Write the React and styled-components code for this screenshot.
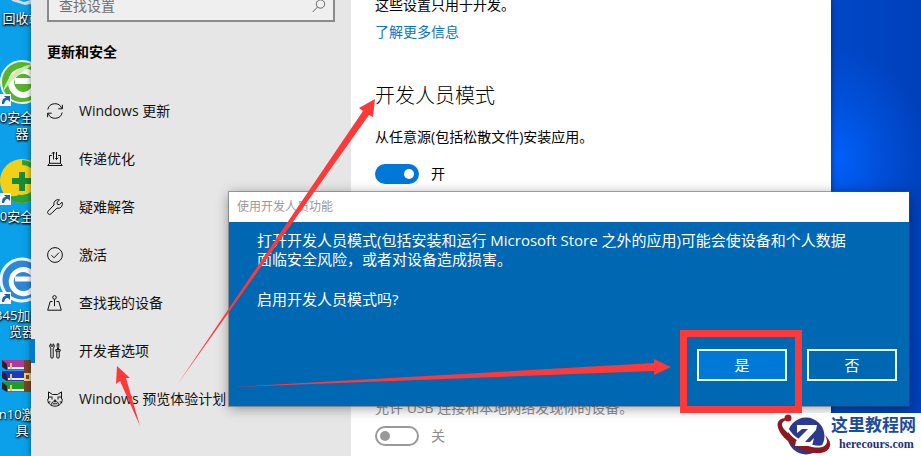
import React from 'react';
import styled, { createGlobalStyle } from 'styled-components';

const GlobalStyle = createGlobalStyle`
  * {
    box-sizing: border-box;
  }

  body {
    margin: 0;
    font-family: "Open Sans", "Noto Sans CJK SC", sans-serif;
    font-size: 14px;
    line-height: 20px;
    color: #000;
  }
`;

const Desktop = styled.div`
  position: relative;
  display: grid;
  grid-template-columns: 31px 1fr 90px;
  height: 100vh;
  overflow: hidden;
  background:
    radial-gradient(ellipse 90px 110px at calc(100% - 84px) 158px, #0060fa, rgba(0, 96, 250, 0.4) 50%, rgba(0, 96, 250, 0)),
    linear-gradient(90deg, #0aa0ea 0, #0aa0ea 40px, #0048c8 90%, #0040ba 100%);
`;

const Shortcuts = styled.div`
  overflow: hidden;
`;

const ShortcutList = styled.div`
  width: 80px;
  margin: -41px 0 0 -18px;
`;

const Shortcut = styled.div`
  height: 99px;
  text-align: center;
  font-size: 13px;
  line-height: 16px;
  color: #fff;
  text-shadow: 0 1px 2px #000, 1px 1px 2px #000;

  svg {
    display: block;
    margin: 0 auto 3px;
  }
`;

const Line = styled.div`
  display: flex;
  justify-content: center;
  white-space: nowrap;
`;

const SettingsWindow = styled.div`
  display: grid;
  grid-template-columns: 320px 1fr;
  background: #fff;
  box-shadow: 0 0 6px rgba(0, 0, 0, 0.5);
  overflow: hidden;
`;

const Sidebar = styled.aside`
  background: #e6e6e6;
`;

const SearchBox = styled.label`
  display: flex;
  align-items: center;
  height: 33px;
  margin: -11px 16px 0;
  padding: 0 7px 0 10px;
  border: 2px solid #8a8a8a;
  background: #efefef;
`;

const SearchInput = styled.input`
  flex: 1;
  min-width: 0;
  padding: 0;
  border: 0;
  outline: 0;
  background: none;
  font: inherit;

  &::placeholder {
    color: #707070;
  }
`;

const Category = styled.h2`
  margin: 20px 16px 25px;
  font-size: 14px;
  line-height: 20px;
  font-weight: 700;
`;

const NavItem = styled.a`
  display: flex;
  align-items: center;
  gap: 12px;
  height: 48px;
  color: #111;
  text-decoration: none;

  &::before {
    content: "";
    width: 4px;
    height: 24px;
    background: ${(props) => (props.$active ? '#0078d7' : 'transparent')};
  }

  svg {
    margin-right: 4px;
  }
`;

const Content = styled.main`
  padding: 0 24px;
  white-space: nowrap;
`;

const Intro = styled.p`
  margin: -5px 0 7px;
`;

const MoreLink = styled.a`
  display: block;
  color: #0a74cc;
  text-decoration: none;
`;

const SectionTitle = styled.h1`
  margin: 39px 0 16px;
  font-size: 20px;
  line-height: 30px;
  font-weight: 300;
`;

const Setting = styled.section`
  display: flex;
  flex-direction: column;
  gap: ${(props) => (props.$disabled ? '8px' : '17px')};
  margin-bottom: 214px;
  color: ${(props) => (props.$disabled ? '#8c8c8c' : '#000')};
`;

const Text = styled.p`
  margin: 0;
`;

const ToggleRow = styled.label`
  display: flex;
  align-items: center;
  gap: 12px;
`;

const Toggle = styled.input`
  appearance: none;
  display: flex;
  align-items: center;
  width: 44px;
  height: 20px;
  margin: 0;
  padding: 0 3px;
  border: 2px solid #999;
  border-radius: 10px;

  &::before {
    content: "";
    width: 10px;
    height: 10px;
    border-radius: 50%;
    background: #999;
  }

  &:checked {
    justify-content: flex-end;
    border-color: #0078d7;
    background: #0078d7;
  }

  &:checked::before {
    background: #fff;
  }
`;

const Dialog = styled.div`
  position: absolute;
  top: 192px;
  left: 229px;
  right: 12px;
  background: #0067b3;
  color: #fff;
  font-size: 15px;
  line-height: 19px;
  box-shadow: 0 0 0 1px rgba(70, 80, 90, 0.45), 0 2px 12px rgba(0, 0, 0, 0.4);
`;

const DialogTitle = styled.div`
  height: 30px;
  padding: 0 8px;
  background: #fff;
  color: #999;
  font-size: 12px;
  line-height: 30px;
`;

const DialogBody = styled.div`
  padding: 9px 28px 0;

  p {
    margin: 0 0 21px;
  }
`;

const DialogButtons = styled.div`
  display: flex;
  justify-content: flex-end;
  gap: 20px;
  padding: 19px 12px 25px;
`;

const DialogButton = styled.button`
  width: 90px;
  height: 32px;
  padding: 0;
  border: 2px solid #e4fbff;
  background: ${(props) => (props.$primary ? '#0078d7' : 'transparent')};
  color: #fff;
  font: inherit;
`;

const Annotations = styled.svg`
  position: absolute;
  top: 0;
  left: 0;
  pointer-events: none;
`;

const Watermark = styled.div`
  position: absolute;
  right: 0;
  bottom: 0;
  display: flex;
  width: 147px;
  height: 43px;
  background: #fff;
  white-space: nowrap;
`;

const WatermarkText = styled.div`
  color: #1b4c9c;
  font-size: 17px;
  line-height: 24px;
  font-weight: 700;

  small {
    display: block;
    padding-left: 8px;
    font-family: "Liberation Serif", serif;
    font-size: 12px;
    line-height: 14px;
    color: #1d2f80;
  }
`;

const icons = {
  update: (
    <>
      <path d="M.8 6.5A7.3 7.3 0 0 1 14.8 5.5M15.2 9.5A7.3 7.3 0 0 1 1.2 10.5" />
      <path d="M15.4 1.8v4H11.3M.6 14.2v-4h4.1" />
    </>
  ),
  delivery: (
    <>
      <path d="M4.8 4.5H2.5v7.8M11.2 4.5h2.3v7.8M2.5 12.3L.7 14.5h14.6l-1.8-2.2zM6.5 8.5V1" />
      <path d="M9.5 1v7.5M4.8 2.8L6.5 1l1.3 1.4M8.2 7.1l1.3 1.4 1.7-1.8" />
    </>
  ),
  wrench: (
    <path d="M15 3.2l-2.6 2.5-2-.4-.4-2L12.5.9A4.2 4.2 0 0 0 7 6L1.2 12a2 2 0 0 0 2.9 2.8L10 9.1a4.2 4.2 0 0 0 5-5.9z" />
  ),
  activate: (
    <>
      <circle cx="8" cy="8" r="7.4" />
      <path d="M4.4 8.2L7 10.8l5-5.2" />
    </>
  ),
  find: (
    <>
      <circle cx="7.5" cy="2.4" r="1.8" />
      <path d="M7.5 4.2v7M5.5 6.5H3.2L.7 15.2h13.6L11.8 6.5H9.5" />
    </>
  ),
  developer: (
    <>
      <path d="M4 .8a2.4 2.4 0 0 0-.2 4.2V14a1.2 1.2 0 0 0 2.4 0V5A2.4 2.4 0 0 0 6 .8v2.4H4z" />
      <path d="M10.2.8h1.6v3l-.3.8v2h-1v-2l-.3-.8zM8.8 6.6h4.4v1.6H8.8zM9.8 8.2V14a1.2 1.2 0 0 0 2.4 0V8.2" />
    </>
  ),
  insider: (
    <>
      <path d="M1.5 8V.9l4 2.6h5l4-2.6V8M.7 8.2C.7 12 3.5 15.2 8 15.2S15.3 12 15.3 8.2M1.5 6h4M10.5 6h4M.7 8.2l.8-.4M15.3 8.2l-.8-.4M.8 11.4l2.6-.6M15.2 11.4l-2.6-.6" />
      <path d="M5 6.5v2M11 6.5v2M7 9.2h2L8 10.4zM4.2 13.8c0-2.2 1.6-3.3 3.8-3.2 2.2-.1 3.8 1 3.8 3.2M5.5 12.8h5" />
    </>
  ),
};

function Icon({ name }) {
  return (
    <svg width="16" height="16" viewBox="0 0 16 16" fill="none" stroke="#111" strokeWidth="1">
      {icons[name]}
    </svg>
  );
}

const navItems = [
  { icon: 'update', label: 'Windows 更新' },
  { icon: 'delivery', label: '传递优化' },
  { icon: 'wrench', label: '疑难解答' },
  { icon: 'activate', label: '激活' },
  { icon: 'find', label: '查找我的设备' },
  { icon: 'developer', label: '开发者选项', active: true },
  { icon: 'insider', label: 'Windows 预览体验计划' },
];

// Small "linked file" arrow in the corner of a desktop icon
const LinkArrow = () => (
  <>
    <path d="M2 36h11v12H2z" fill="#f4f7fa" />
    <path d="M4 46c0-4 1-6 4-6l-2-2h6v6l-2-2c-3 0-3 2-4 4z" fill="#245fa8" />
  </>
);

const shortcuts = [
  {
    lines: ['回收站'],
    art: <path d="M12 38l14 5 16-5-2 6-13 2-13-4z" fill="#d8dde1" />,
  },
  {
    lines: ['360安全浏览', '器'],
    art: (
      <>
        <circle cx="24" cy="24" r="21" fill="#55b52b" stroke="#eef8ea" strokeWidth="2" />
        <path d="M36 30a12 12 0 1 1 1-7H17" fill="none" stroke="#fff" strokeWidth="6" />
        <path d="M5 34C8 19 21 7 39 5 23 13 13 22 5 34z" fill="#c9eeaa" />
        <LinkArrow />
      </>
    ),
  },
  {
    lines: ['360安全卫士'],
    art: (
      <>
        <circle cx="24" cy="24" r="22" fill="#f3d018" />
        <path d="M24 3a21 21 0 0 1 0 43c-9 0-13-4-15-8 8 3 15 0 16-6z" fill="#29a336" />
        <circle cx="24" cy="23" r="15" fill="#f3d018" />
        <path d="M21 15h6v6h7v6h-7v7h-6v-7h-7v-6h7z" fill="#188b36" />
        <LinkArrow />
      </>
    ),
  },
  {
    lines: ['2345加速浏', '览器'],
    art: (
      <>
        <circle cx="24" cy="24" r="21" fill="#2d87d8" stroke="#edf7ff" strokeWidth="3" />
        <path d="M36 31a12 12 0 1 1 1-8H17" fill="none" stroke="#fff" strokeWidth="5" />
        <LinkArrow />
      </>
    ),
  },
  {
    lines: ['Win10激活工', '具'],
    art: (
      <>
        <path d="M4 5h36v10H8z" fill="#b03a9b" />
        <path d="M4 16h36v10H8z" fill="#2335b8" />
        <path d="M4 27h36v10H8z" fill="#219a26" />
        <path d="M4 5l5 4v6l-5-3zM4 16l5 4v6l-5-3zM4 27l5 4v6l-5-3z" fill="#2b2030" />
        <path d="M10 13h28M10 24h28M10 35h28" stroke="#eee" strokeWidth="2" />
        <path d="M13 8v6M13 19v6M13 30v6" stroke="#e8c560" strokeWidth="2" />
        <path d="M26 5h7v32h-7z" fill="#7b4429" />
        <path d="M27 19h5v6h-5z" fill="none" stroke="#ecd17b" strokeWidth="2" />
      </>
    ),
  },
];

function DesktopShortcuts() {
  return (
    <Shortcuts>
      <ShortcutList>
        {shortcuts.map((item) => (
          <Shortcut key={item.lines[0]}>
            <svg width="48" height="48" viewBox="0 0 48 48">
              {item.art}
            </svg>
            {item.lines.map((line) => (
              <Line key={line}>{line}</Line>
            ))}
          </Shortcut>
        ))}
      </ShortcutList>
    </Shortcuts>
  );
}

function Settings() {
  return (
    <SettingsWindow>
      <Sidebar>
        <SearchBox>
          <SearchInput type="text" placeholder="查找设置" aria-label="查找设置" />
          <svg width="14" height="14" viewBox="0 0 14 14" fill="none" stroke="#666">
            <circle cx="8.5" cy="5" r="4.2" />
            <path d="M5.5 8L.7 13" />
          </svg>
        </SearchBox>
        <Category>更新和安全</Category>
        <nav>
          {navItems.map((item) => (
            <NavItem key={item.icon} href={`#${item.icon}`} $active={item.active}>
              <Icon name={item.icon} />
              {item.label}
            </NavItem>
          ))}
        </nav>
      </Sidebar>
      <Content>
        <Intro>这些设置只用于开发。</Intro>
        <MoreLink href="#more">了解更多信息</MoreLink>
        <SectionTitle>开发人员模式</SectionTitle>
        <Setting>
          <Text>从任意源(包括松散文件)安装应用。</Text>
          <ToggleRow>
            <Toggle type="checkbox" defaultChecked />
            开
          </ToggleRow>
        </Setting>
        <Setting $disabled>
          <Text>允许 USB 连接和本地网络发现你的设备。</Text>
          <ToggleRow>
            <Toggle type="checkbox" />
            关
          </ToggleRow>
        </Setting>
      </Content>
    </SettingsWindow>
  );
}

function ConfirmDialog() {
  return (
    <Dialog role="dialog" aria-labelledby="dialog-title">
      <DialogTitle id="dialog-title">使用开发人员功能</DialogTitle>
      <DialogBody>
        <p>
          打开开发人员模式(包括安装和运行 Microsoft Store 之外的应用)可能会使设备和个人数据
          <br />
          面临安全风险，或者对设备造成损害。
        </p>
        <p>启用开发人员模式吗?</p>
      </DialogBody>
      <DialogButtons>
        <DialogButton type="button" $primary>是</DialogButton>
        <DialogButton type="button">否</DialogButton>
      </DialogButtons>
    </Dialog>
  );
}

function App() {
  return (
    <>
      <GlobalStyle />
      <Desktop lang="zh-CN">
        <DesktopShortcuts />
        <Settings />
        <ConfirmDialog />
        <Watermark>
          <svg width="57" height="43" viewBox="0 0 57 43">
            <circle cx="32" cy="23" r="18.5" fill="#2b3a8c" />
            <path d="M14 5C-1 4 1 18 15 29c14 12 38 16 41 4 1-4-2-8-5-11 5 9 0 13-11 11C23 30 3 14 9 9z" fill="#8e1820" />
            <path d="M10 10c1 9 13 20 28 24 10 2 16-1 14-7 0 7-9 7-19 3C22 26 14 18 12 9z" fill="#fff" />
            <path d="M23 12h20l-1 5-11 12h5l4-4-2 8H21l1-5 12-12h-6l-5 4z" fill="#fff" />
            <circle cx="14" cy="5" r="3.5" fill="#a31920" />
          </svg>
          <WatermarkText>
            这里教程网
            <small>herecours.com</small>
          </WatermarkText>
        </Watermark>
        <Annotations width="921" height="456" viewBox="0 0 921 456" fill="#fc3a3a">
          <path d="M177 385L363 111l-4-3 16-9-2 18-4-2z" />
          <path d="M234 387l420-24v-4l17 8-17 8v-4z" />
          <path d="M117 366l13 12-4 0 14 48-20-45-4 3z" />
          <path d="M683.5 333.5h115v76h-115z" fill="none" stroke="#fc3a3a" strokeWidth="7" />
        </Annotations>
      </Desktop>
    </>
  );
}

export default App;
